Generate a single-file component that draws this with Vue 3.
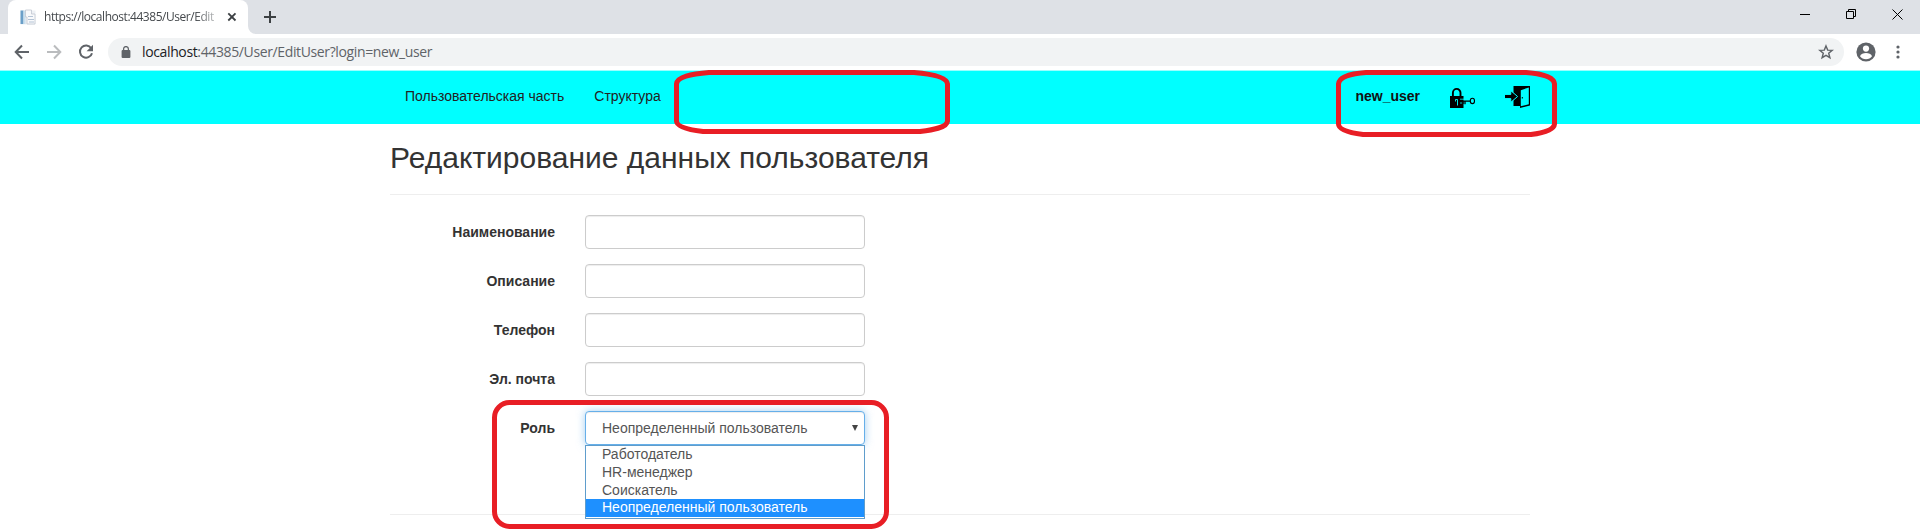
<script setup>
const fields = ['Наименование', 'Описание', 'Телефон', 'Эл. почта']
const roles = ['Работодатель', 'HR-менеджер', 'Соискатель', 'Неопределенный пользователь']
const selected = roles[3]
</script>

<template>
  <div class="window">
    <header class="tabstrip">
      <div class="tab">
        <svg class="favicon" width="16" height="16" viewBox="0 0 16 16">
          <rect x="0.5" y="1.5" width="15" height="14" fill="#eef1f5" />
          <rect x="0.5" y="1.5" width="3" height="13.5" fill="#6a9fc8" />
          <rect x="3.5" y="1.5" width="2" height="13.5" fill="#c9dfee" />
          <path d="M5.5 1h6v4h3.5v10H7V8H5.5z" fill="#f8f9fb" stroke="#c0c6d0" stroke-width=".8" />
          <path d="M8 7.5h5M8 10.5h6M9 13h5" stroke="#b4c4d6" stroke-width="1" />
        </svg>
        <span class="tab-title">https://localhost:44385/User/Edit</span>
        <svg class="tab-close" width="10" height="10" viewBox="0 0 10 10"><path d="M1.3 1.3l7.2 7.2M8.5 1.3L1.3 8.5" stroke="#3c4043" stroke-width="1.8" /></svg>
      </div>
      <svg class="tab-foot" width="8" height="8" viewBox="0 0 8 8"><path d="M0 0a8 8 0 0 0 8 8H0z" fill="#fff" /></svg>
      <svg class="plus" width="12" height="12" viewBox="0 0 12 12"><path d="M6 0v12M0 6h12" stroke="#3c4043" stroke-width="2" /></svg>
      <div class="controls">
        <svg width="10" height="11" viewBox="0 0 10 11"><path d="M0 5.5h10" stroke="#000" /></svg>
        <svg width="10" height="11" viewBox="0 0 10 11"><path d="M.5 2.5h7v7h-7zM2.500 2.500v-2h7v7h-2" fill="none" stroke="#000" /></svg>
        <svg width="11" height="11" viewBox="0 0 11 11"><path d="M.5.5l10 10M10.5.5l-10 10" stroke="#000" /></svg>
      </div>
    </header>

    <div class="toolbar">
      <svg class="nav-icon" width="16" height="16" viewBox="0 0 16 16"><path d="M15 8H2M8 1.5L1.7 8 8 14.5" fill="none" stroke="#5f6368" stroke-width="2" /></svg>
      <svg class="nav-icon" width="16" height="16" viewBox="0 0 16 16"><path d="M1 8h13M8 1.5L14.3 8 8 14.5" fill="none" stroke="#babcbe" stroke-width="2" /></svg>
      <svg class="nav-icon" width="16" height="16" viewBox="0 0 16 16"><path d="M13.2 4.2A6.1 6.1 0 1 0 14 9.2" fill="none" stroke="#5f6368" stroke-width="2" /><path d="M15 .8v6.4H8.6z" fill="#5f6368" /></svg>
      <div class="omnibox">
        <svg width="10" height="12" viewBox="0 0 10 12"><rect x=".6" y="4" width="8.8" height="8" rx="1" fill="#5f6368" /><path d="M2.6 5V3a2.4 2.4 0 0 1 4.8 0v2" fill="none" stroke="#5f6368" stroke-width="1.3" /></svg>
        <div class="url"><span>localhost</span>:44385/User/EditUser?login=new_user</div>
        <svg class="star" width="16" height="16" viewBox="0 0 16 16"><path d="M8 1.9l1.7 4.2 4.5.3-3.5 2.9 1.2 4.4L8 11.3l-3.9 2.4 1.2-4.4-3.5-2.9 4.5-.3z" fill="none" stroke="#5f6368" stroke-width="1.4" /></svg>
      </div>
      <svg class="avatar" width="20" height="20" viewBox="0 0 20 20"><circle cx="10" cy="10" r="9.6" fill="#5f6368" /><circle cx="10" cy="6.6" r="3.1" fill="#fff" /><path d="M4 14.2c.6-2.3 3.5-3.1 6-3.1s5.4.8 6 3.1c-1.3 1.9-3.5 3-6 3s-4.7-1.1-6-3z" fill="#fff" /></svg>
      <svg class="dots" width="4" height="14" viewBox="0 0 4 14"><g fill="#5f6368"><circle cx="2" cy="2" r="1.6" /><circle cx="2" cy="7" r="1.6" /><circle cx="2" cy="12" r="1.6" /></g></svg>
    </div>

    <nav class="navbar">
      <a class="link first">Пользовательская часть</a>
      <a class="link">Структура</a>
      <b class="user">new_user</b>
      <svg class="lock" width="26" height="22" viewBox="0 0 26 22">
        <path d="M2.9 9V5.8a3.800 3.900 0 0 1 7.600 0V9" fill="none" stroke="#000" stroke-width="1.900" />
        <rect y="9" width="13.500" height="12" fill="#000" />
        <path d="M5.500 12.500h2v6M5.500 12.500v2" fill="none" stroke="#0ff" stroke-width=".9" />
        <path d="M10 12.200h10M10 16h2.500" stroke="#0ff" stroke-width=".8" />
        <path d="M10.500 14.100H20M15 14v3.200M13 14v3" fill="none" stroke="#000" stroke-width="1.300" />
        <ellipse cx="22.400" cy="13.900" rx="2.100" ry="2.700" fill="#0ff" stroke="#000" stroke-width="1.100" />
      </svg>
      <svg class="exit" width="26" height="22" viewBox="0 0 26 22">
        <path d="M8.500 0H25v19.500L15 22v-2H8.500z" fill="#000" />
        <path d="M15.800 4.200L23.800 1.500v16.800l-8 2z" fill="#0ff" />
        <path d="M-.5 8.400h6.300V4.700L12.600 10.500 5.800 16.300v-3.700H-.5z" fill="#000" stroke="#0ff" stroke-width="1" />
        <path d="M17.300 11v1.500" stroke="#000" stroke-width="1" />
      </svg>
    </nav>

    <main class="page">
      <h2>Редактирование данных пользователя</h2>
      <hr class="rule" />
      <form class="form">
        <div v-for="f in fields" :key="f" class="row">
          <label>{{ f }}</label>
          <input class="control" type="text" />
        </div>
        <div class="row">
          <label>Роль</label>
          <div class="select control">
            <span>{{ selected }}</span>
            <svg width="6" height="6" viewBox="0 0 6 6"><path d="M0 0h6L3 6z" fill="#444" /></svg>
            <ul class="menu">
              <li v-for="r in roles" :key="r" :class="{ active: r === selected }">{{ r }}</li>
            </ul>
          </div>
        </div>
      </form>
      <hr class="rule end" />
    </main>

    <svg class="marks" width="1920" height="532" viewBox="0 0 1920 532" fill="none" stroke="#e81e25" stroke-width="5">
      <path d="M709 72.5H914C932 74 947 77 947.5 84V121C947 128 932 130 920 131.5H703C690 130 676.5 127 676.5 121V84C677 77 691 74 709 72.5z" />
      <path d="M1366 72.5H1526C1541 73.5 1554 77 1554.5 84V124C1554 130 1543 133 1531 134.5H1363C1351 133 1338.5 130 1338.5 124V84C1339 77 1351 73.5 1366 72.5z" />
      <rect x="494.5" y="402.5" width="392" height="124" rx="15" />
    </svg>
  </div>
</template>

<style>
html, body { margin: 0; overflow: hidden; background: #fff; }
</style>

<style scoped>
* { box-sizing: border-box; }
svg { display: block; flex: none; }
.window { position: relative; width: 1920px; height: 532px; overflow: hidden; background: #fff; font: 14px/20px "Liberation Sans", Arial, sans-serif; color: #333; }
.tabstrip { height: 34px; background: #dee1e6; display: flex; padding-left: 8px; }
.tab { width: 240px; height: 34px; background: #fff; border-radius: 8px 8px 0 0; display: flex; align-items: center; padding-left: 12px; }
.tab-title { width: 175px; margin-left: 8px; white-space: nowrap; font: 12px/18px "Open Sans", "Noto Sans", sans-serif; letter-spacing: -.46px; color: #45494d; -webkit-mask-image: linear-gradient(90deg, #000 86%, transparent 104%); mask-image: linear-gradient(90deg, #000 86%, transparent 104%); }
.tab-close { margin-left: 8px; }
.tab-foot { align-self: flex-end; }
.plus { margin: 11px 0 0 8px; }
.controls { margin: 9px 17px 0 auto; display: flex; gap: 36px; }
.toolbar { height: 37px; display: flex; align-items: center; padding-left: 14px; border-bottom: 1px solid #9ff; }
.nav-icon { margin-right: 16px; }
.nav-icon + .nav-icon + .nav-icon { margin-right: 14px; }
.omnibox { width: 1736px; height: 28px; border-radius: 14px; background: #f1f3f4; display: flex; align-items: center; padding: 0 10px 0 13px; }
.url { margin-left: 11px; font: 14px/20px "Open Sans", "Noto Sans", sans-serif; letter-spacing: -.37px; color: #5f6368; white-space: nowrap; }
.url span { color: #202124; }
.star { margin-left: auto; }
.avatar { margin-left: 12px; }
.dots { margin-left: 20px; }
.navbar { height: 53px; background: #0ff; display: flex; padding-left: 405px; }
.link { color: #222; margin: 15px 0 0 30px; line-height: 20px; white-space: nowrap; }
.link.first { margin-left: 0; }
.user { margin: 15px 0 0 auto; color: #111; }
.lock { margin: 16px 0 0 30px; }
.exit { margin: 15px 389px 0 29px; }
.page { width: 1140px; margin: 0 auto; }
h2 { margin: 0; padding-top: 17px; font-weight: 400; font-size: 30px; line-height: 33px; white-space: nowrap; }
.rule { border: 0; height: 1px; background: #eee; margin: 20px 0; }
.form { display: flex; flex-direction: column; gap: 15px; }
.row { display: flex; height: 34px; }
label { width: 165px; margin-right: 30px; padding-top: 7px; text-align: right; font-weight: 700; }
.control { width: 280px; height: 34px; border: 1px solid #ccc; border-radius: 4px; background: #fff; box-shadow: inset 0 1px 1px rgba(0,0,0,.075); padding: 0 6px 0 16px; color: #555; }
.select { position: relative; display: flex; align-items: center; justify-content: space-between; border-color: #66afe9; box-shadow: inset 0 1px 1px rgba(0,0,0,.075), 0 0 8px rgba(102,175,233,.6); white-space: nowrap; }
.menu { position: absolute; z-index: 1; left: -1px; top: 33px; width: 280px; height: 74px; margin: 0; padding: 0; list-style: none; background: #fff; border: 1px solid #5f9dcc; }
.menu li { height: 18px; line-height: 17px; padding-left: 16px; }
.menu .active { margin-top: -1px; background: #1e90ff; color: #fff; }
.rule.end { margin: 69px 0 0; }
.marks { position: absolute; inset: 0; pointer-events: none; z-index: 2; }
</style>
